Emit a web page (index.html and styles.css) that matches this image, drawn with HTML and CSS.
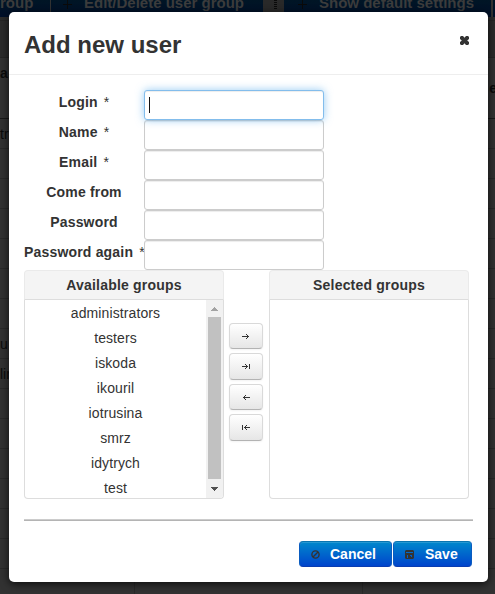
FILE: index.html
```html
<!DOCTYPE html>
<html lang="en">
<head>
<meta charset="utf-8">
<title>Add new user</title>
<link rel="stylesheet" href="styles.css">
</head>
<body>
<div class="page">
  <div class="toolbar">
    <span class="tool first">roup</span>
    <span class="tool edit"><svg width="9" height="9" viewBox="0 0 9 9"><path d="M4 0h1v4h4v1H5v4H4V5H0V4h4z"/></svg>Edit/Delete user group</span>
    <span class="grip"><i></i></span>
    <span class="tool show"><svg width="9" height="9" viewBox="0 0 9 9"><path d="M4 0h1v4h4v1H5v4H4V5H0V4h4z"/></svg>Show default settings</span>
    <span class="tool last"></span>
  </div>
  <div class="band"></div>
  <div class="band tall"></div>
  <div class="row head"><b>a</b><b class="right">e</b></div>
  <div class="row">tr</div>
  <div class="row"></div><div class="row"></div><div class="row"></div><div class="row"></div><div class="row"></div><div class="row"></div>
  <div class="row">u</div>
  <div class="row">lir</div>
  <div class="row"></div><div class="row"></div><div class="row"></div><div class="row"></div><div class="row"></div><div class="row"></div>
  <div class="row cols"><i></i><i></i></div>
</div>
<div class="modal">
  <div class="header">
    <h3>Add new user</h3>
    <svg class="close" width="9" height="9" viewBox="0 0 9 9"><path d="M1 0h2l1.5 1.8L6 0h2l1 1v2L7.2 4.5 9 6v2L8 9H6L4.500 7.200 3 9H1L0 8V6l1.800-1.500L0 3V1z"/></svg>
  </div>
  <div class="fields">
    <div class="field"><label><b>Login</b> <em>*</em></label><div class="input focus"><i></i></div></div>
    <div class="field"><label><b>Name</b> <em>*</em></label><div class="input"></div></div>
    <div class="field"><label><b>Email</b> <em>*</em></label><div class="input"></div></div>
    <div class="field"><label><b>Come from</b></label><div class="input"></div></div>
    <div class="field"><label><b>Password</b></label><div class="input"></div></div>
    <div class="field"><label><b>Password again</b> <em>*</em></label><div class="input"></div></div>
  </div>
  <div class="picker">
    <div class="list">
      <div class="caption">Available groups</div>
      <div class="box">
        <ul>
          <li>administrators</li><li>testers</li><li>iskoda</li><li>ikouril</li>
          <li>iotrusina</li><li>smrz</li><li>idytrych</li><li>test</li>
        </ul>
        <div class="scroll">
          <svg width="7" height="4" viewBox="0 0 7 4"><path fill="#a3a3a3" d="M3 0h1v1h1v1h1v1h1v1H0V3h1V2h1V1h1z"/></svg>
          <span class="thumb"></span>
          <svg width="7" height="4" viewBox="0 0 7 4"><path fill="#505050" d="M0 0h7v1H6v1H5v1H4v1H3V3H2V2H1V1H0z"/></svg>
        </div>
      </div>
    </div>
    <div class="moves">
      <button><svg width="8" height="7" viewBox="0 0 8 7"><path d="M0 3h7v1H0zM4 1h1v1H4zM5 2h1v3H5zM4 5h1v1H4z"/></svg></button>
      <button class="big"><svg width="8" height="7" viewBox="0 0 8 7"><path d="M0 3h6v1H0zM3 1h1v1H3zM4 2h1v3H4zM3 5h1v1H3zM7 1h1v5H7z"/></svg></button>
      <button class="next"><svg width="8" height="7" viewBox="0 0 8 7"><path d="M1 3h7v1H1zM3 1h1v1H3zM2 2h1v3H2zM3 5h1v1H3z"/></svg></button>
      <button class="big"><svg width="8" height="7" viewBox="0 0 8 7"><path d="M2 3h6v1H2zM4 1h1v1H4zM3 2h1v3H3zM4 5h1v1H4zM0 1h1v5H0z"/></svg></button>
    </div>
    <div class="list">
      <div class="caption">Selected groups</div>
      <div class="box"></div>
    </div>
  </div>
  <div class="rule"></div>
  <div class="actions">
    <div class="action cancel"><svg width="9" height="9" viewBox="0 0 9 9"><circle cx="4.5" cy="4.5" r="3.6" fill="none" stroke="#333" stroke-width="1.4"/><path d="M2 7l5-5" stroke="#333" stroke-width="1.4"/></svg>Cancel</div>
    <div class="action save"><svg width="9" height="9" viewBox="0 0 9 9"><path fill="#333" fill-rule="evenodd" d="M1 0h7l1 1v7L8 9H1L0 8V1zM1 2h7v1H1zM2 5v3h1V5zM5 5h2v2H6V6H5z"/></svg>Save</div>
  </div>
</div>
</body>
</html>
```
FILE: styles.css
```css
* { box-sizing: border-box; }
body {
  margin: 0;
  height: 594px;
  overflow: hidden;
  background: #323232;
  font: 14px/20px "Liberation Sans", Arial, sans-serif;
  color: #333;
}
svg { flex: none; display: block; }

.page { width: 495px; height: 594px; overflow: hidden; color: #0a0a0a; }
.toolbar { display: flex; height: 17px; overflow: hidden; }
.tool {
  flex: none;
  height: 17px;
  display: flex;
  align-items: flex-start;
  background: linear-gradient(#001525, #000f29);
  color: #3c3c3c;
  font-weight: bold;
  font-size: 15px;
  line-height: 6px;
  white-space: nowrap;
}
.tool svg { fill: #0a0a0a; margin-right: 12px; }
.first { width: 50px; }
.edit { width: 212px; margin-left: 1px; padding-left: 12px; }
.grip { flex: none; width: 21px; background: #292929; padding-left: 11px; }
.grip i { display: block; width: 3px; height: 9px; background: repeating-linear-gradient(#0a0a0a 0 1px, #292929 1px 2px); }
.show { width: 207px; padding-left: 14px; }
.last { width: 4px; margin-left: 2px; }
.band { height: 4px; border-bottom: 1px solid #252525; background: #2b2b2b; }
.band.tall { height: 37px; }
.row {
  display: flex;
  height: 30px;
  padding-top: 5px;
  border-bottom: 1px solid #292929;
}
.row.head { height: 61px; border-color: #181818; justify-content: space-between; }
.row.head .right { padding-top: 15px; margin-right: -2px; }
.row.cols { padding: 0; }
.cols i { width: 135px; border-right: 1px solid #292929; }
.cols i + i { width: 228px; }

.modal {
  position: absolute;
  left: 9px;
  top: 12px;
  width: 479px;
  height: 570px;
  background: #fff;
  border-radius: 5px;
  box-shadow: 0 2px 8px rgba(0, 0, 0, .75);
}
.header {
  display: flex;
  justify-content: space-between;
  height: 63px;
  padding: 13px 19px 0 15px;
  border-bottom: 1px solid #eee;
}
h3 { margin: 0; font-size: 24px; line-height: 40px; }
.close { margin-top: 11px; fill: #333; }

.fields { padding: 15px 15px 0; }
.field { display: flex; height: 30px; }
label { width: 120px; padding-top: 2px; text-align: center; white-space: nowrap; letter-spacing: .18px; }
label em { margin-left: 2px; font-style: normal; letter-spacing: 0; }
.input {
  width: 180px;
  height: 30px;
  border: 1px solid #ccc;
  border-radius: 3px;
  background: #fff;
  box-shadow: inset 0 1px 1px rgba(0, 0, 0, .075);
}
.input.focus {
  position: relative;
  padding: 6px 4px;
  border-color: #83bdec;
  box-shadow: inset 0 1px 1px rgba(0, 0, 0, .075), 0 0 8px rgba(82, 168, 236, .6);
}
.focus i { display: block; width: 1px; height: 16px; background: #111; }

.picker { display: flex; padding-left: 15px; }
.list { width: 200px; height: 229px; }
.caption {
  height: 30px;
  padding-top: 4px;
  background: #f4f4f4;
  border: 1px solid #eaeaea;
  border-bottom-color: #ddd;
  border-radius: 4px 4px 0 0;
  font-weight: bold;
  text-align: center;
  letter-spacing: .2px;
}
.box {
  display: flex;
  height: 199px;
  border: 1px solid #ddd;
  border-top: 0;
  border-radius: 0 0 4px 4px;
  overflow: hidden;
}
ul { width: 181px; margin: 0; padding: 1px 0 0; list-style: none; text-align: center; letter-spacing: .1px; }
li { height: 25px; line-height: 25px; }
.scroll { display: flex; flex-direction: column; align-items: center; width: 17px; padding: 7px 0 7px; background: #f1f1f1; }
.thumb { width: 13px; height: 162px; margin: 6px 0 8px; background: #c1c1c1; }
.moves { width: 45px; padding: 53px 0 0 5px; }
button {
  display: flex;
  align-items: center;
  justify-content: center;
  width: 34px;
  height: 26px;
  margin: 0 0 4px;
  padding: 0;
  border: 1px solid #d9d9d9;
  border-bottom-color: #b3b3b3;
  border-radius: 4px;
  background: linear-gradient(#fff, #e6e6e6);
  box-shadow: 0 1px 2px rgba(0, 0, 0, .05);
}
button.big { height: 27px; }
button path { fill: #333; }

.rule { margin: 20px 15px 0; height: 2px; background: linear-gradient(#ccc 50%, #b4b4b4 50%); }
.actions { display: flex; justify-content: flex-end; gap: 1px; padding: 20px 16px 0; }
.action {
  display: flex;
  align-items: center;
  height: 26px;
  padding-left: 11px;
  border: 1px solid #0a70b8;
  border-color: #0a75b0 #0a5cc0 #0a3cb0;
  border-radius: 4px;
  background: linear-gradient(#08c, #04c);
  box-shadow: inset 0 1px 0 rgba(255, 255, 255, .15);
  color: #fff;
  font-weight: bold;
}
.cancel { width: 93px; }
.cancel svg { margin-right: 10px; }
.save { width: 79px; }
.save svg { margin-right: 11px; }
```
